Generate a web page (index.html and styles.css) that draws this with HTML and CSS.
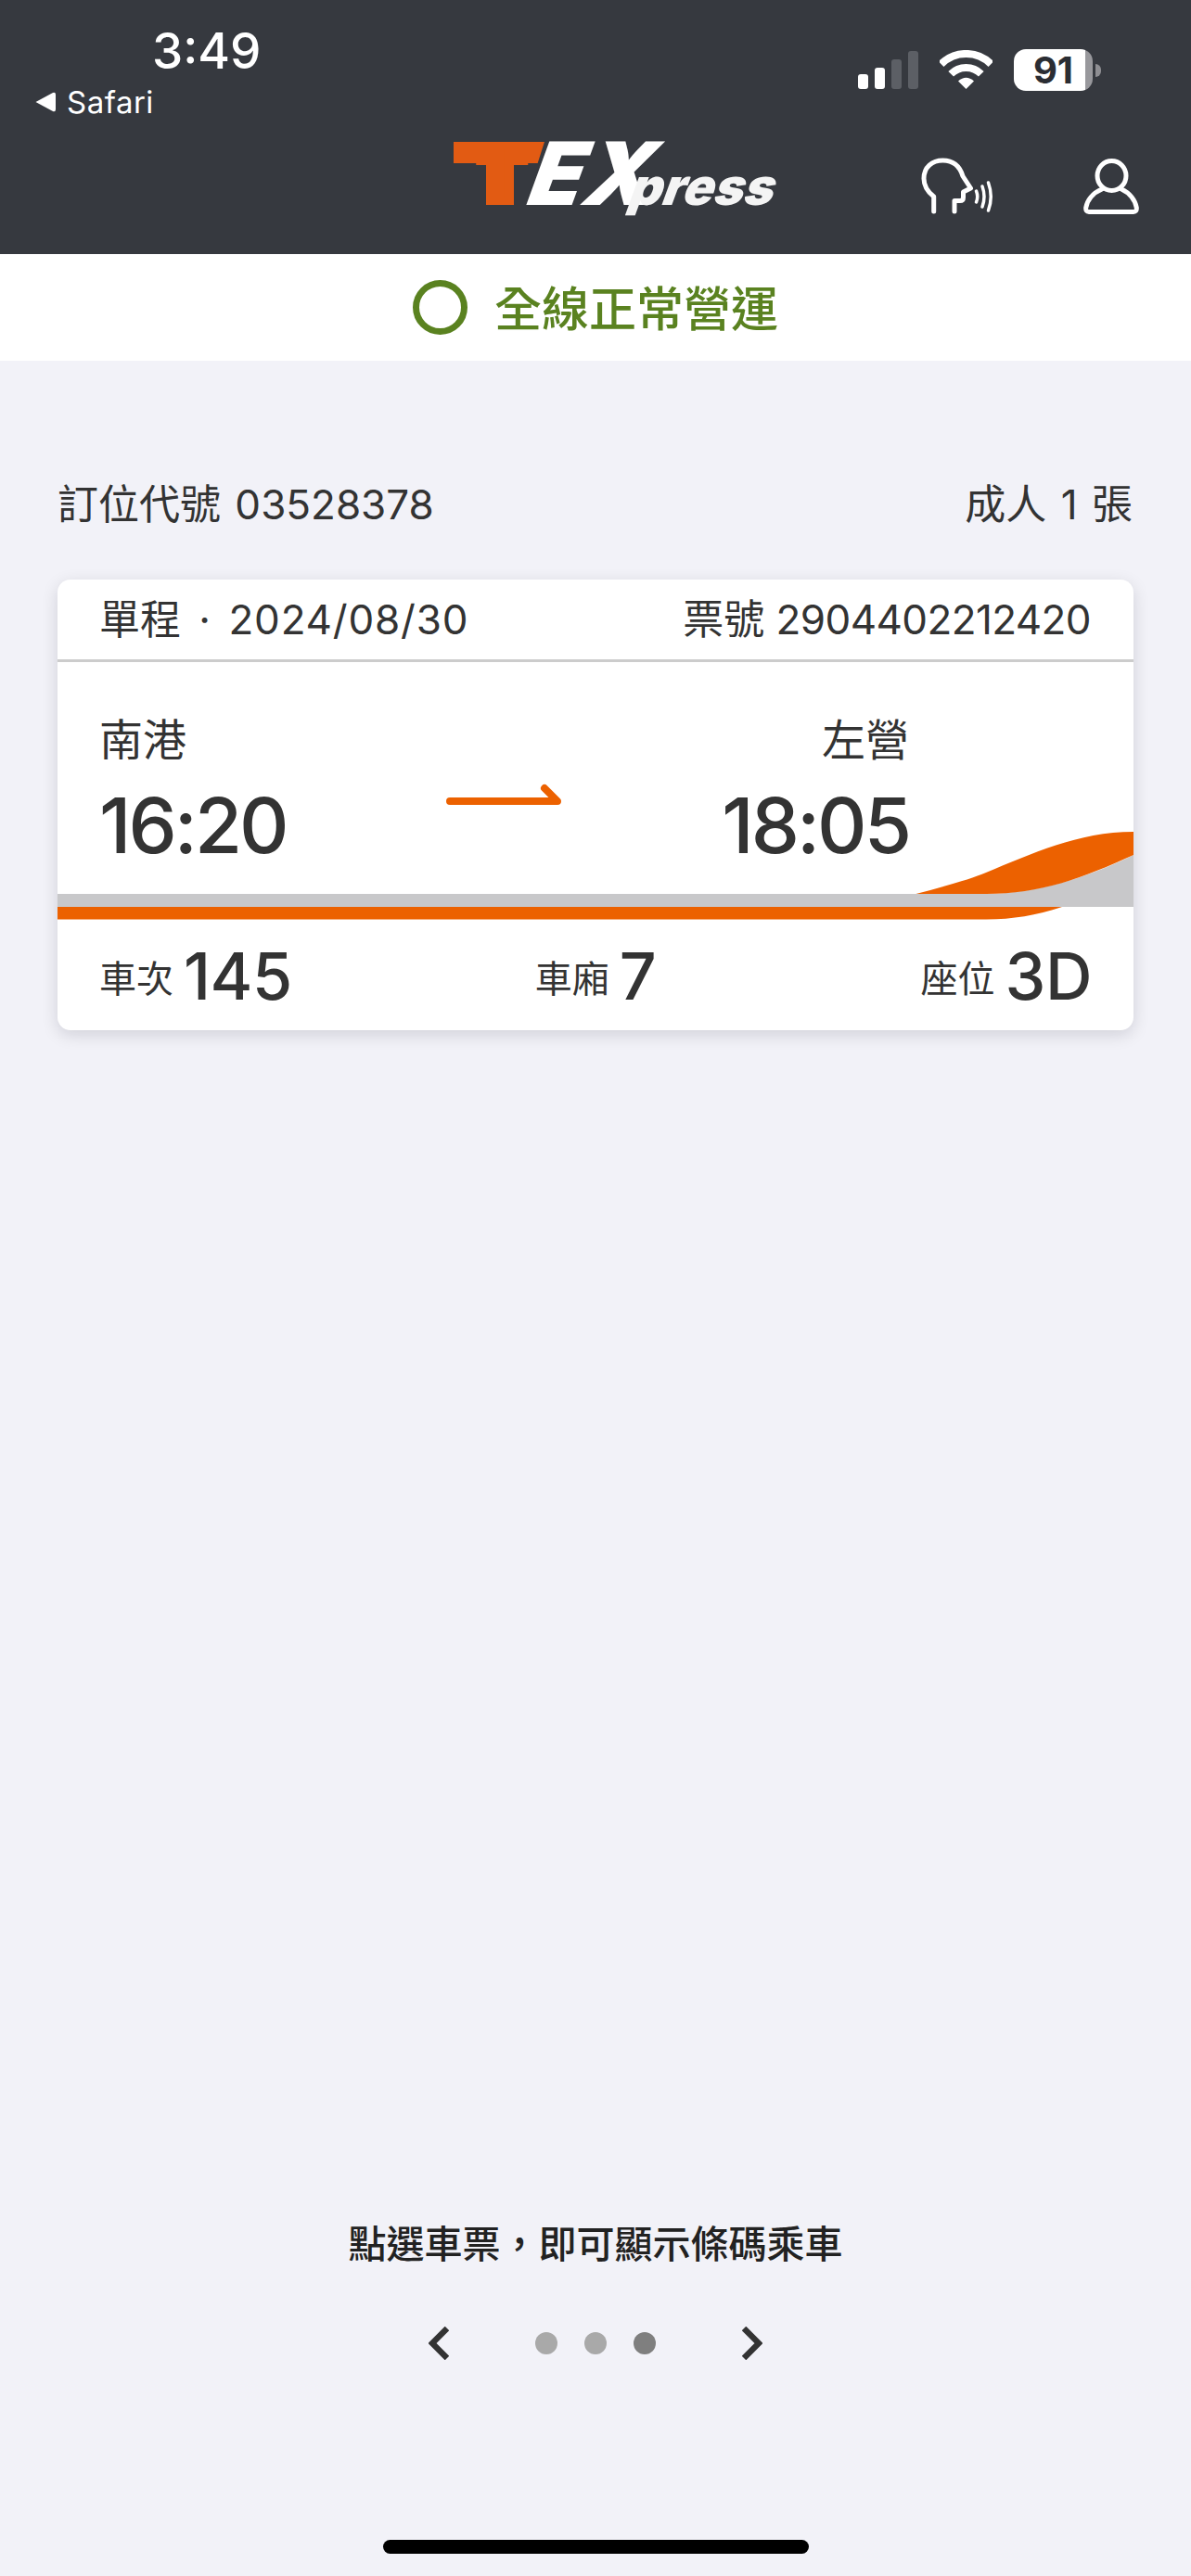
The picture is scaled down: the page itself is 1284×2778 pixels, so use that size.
FILE: index.html
```html
<!DOCTYPE html>
<html lang="zh-Hant">
<head>
<meta charset="utf-8">
<title>TEXpress</title>
<link rel="stylesheet" href="styles.css">
</head>
<body>
<header class="header">
  <div class="statusbar">
    <div class="clock">
      <div class="time">3:49</div>
      <div class="back"><svg class="back-tri" width="22" height="22" viewBox="0 0 22 22"><path d="M0.5 11 L19 1 Q22 0 22 3 V19 Q22 22 19 21 Z"/></svg><span>Safari</span></div>
    </div>
    <div class="status-icons">
      <div class="signal"><i class="bar b1"></i><i class="bar b2"></i><i class="bar b3 dim"></i><i class="bar b4 dim"></i></div>
      <svg class="wifi" width="57" height="42" viewBox="0 0 57 42" fill="none" stroke="#fff" stroke-width="8"><path d="M1.6 15.1 A38 38 0 0 1 55.4 15.1"/><path d="M12.2 25.7 A23 23 0 0 1 44.8 25.7"/><path d="M28.5 42 L20 33.5 Q28.5 26 37 33.5 Z" fill="#fff" stroke="none"/></svg>
      <div class="battery"><span>91</span></div>
      <i class="battery-tip"></i>
    </div>
  </div>
  <nav class="nav">
    <div class="logo" role="img" aria-label="TEXpress">
      <span class="logo-t"><span class="logo-t-glyph">T</span></span>
      <span class="logo-e">E</span>
      <span class="logo-x">X</span>
      <span class="logo-press">press</span>
    </div>
    <svg class="icon-voice" width="100" height="80" viewBox="0 0 100 80" fill="none" stroke="#fff" stroke-width="5" stroke-linecap="round" stroke-linejoin="round">
      <path d="M21.7 68 V52 C14 46 11 39 11 32.5 C11 20 20 13 31.5 13 C43 13 50 20 53 30 L61.5 43 L53.5 47 V53 Q53.5 56.5 50 56.5 H44 V68"/>
      <path d="M67.5 46 Q70 52 67.5 58" stroke-width="3.5"/>
      <path d="M74 41 Q78 52 74 63" stroke-width="3.5"/>
      <path d="M80.5 37 Q86 52 80.5 67" stroke-width="3.5"/>
    </svg>
    <svg class="icon-user" width="60" height="60" viewBox="0 0 60 60" fill="none" stroke="#fff" stroke-width="5" stroke-linecap="round" stroke-linejoin="round">
      <ellipse cx="30.5" cy="18.5" rx="15.5" ry="16"/>
      <path d="M20 33 C10 37 4 45 2.7 53 Q2.3 57.5 6 57.5 H54 Q57.7 57.5 57.3 53 C56 45 50 37 41 33"/>
    </svg>
  </nav>
</header>

<div class="service"><i class="service-ring"></i><span class="service-text">全線正常營運</span></div>

<main class="main">
  <div class="booking"><span>訂位代號 03528378</span><span>成人 1 張</span></div>
  <article class="ticket">
    <div class="ticket-head">
      <span class="trip">單程 · <span class="trip-date">2024/08/30</span></span>
      <span>票號 <span class="ticket-no">2904402212420</span></span>
    </div>
    <div class="route">
      <div class="stop"><div class="station">南港</div><div class="clock-time">16:20</div></div>
      <svg class="arrow" width="124" height="24" viewBox="0 0 124 24" fill="none" stroke="#ec6100" stroke-width="8" stroke-linecap="round" stroke-linejoin="round"><path d="M4 19 H120 L106 5"/></svg>
      <div class="stop stop-end"><div class="station">左營</div><div class="clock-time">18:05</div></div>
    </div>
    <div class="stripe">
      <svg class="stripe-art" width="1160" height="95" viewBox="0 0 1160 95">
        <path fill="#c8c8ca" d="M0 67 H1001 C1060 67 1120 45 1160 25 V81 H0 Z"/>
        <path fill="#ec6100" d="M925.5 67 C955 59 985 51 1001 44 C1050 24 1100 0 1160 0 V25 C1105 50 1060 67 1001 67 Z"/>
        <path fill="#ec6100" d="M0 81 H1083 C1055 90 1030 94.5 1001 94.5 H0 Z"/>
      </svg>
    </div>
    <div class="seat-row">
      <div class="seat"><span class="seat-label">車次</span><span class="seat-value">145</span></div>
      <div class="seat"><span class="seat-label">車廂</span><span class="seat-value">7</span></div>
      <div class="seat seat-end"><span class="seat-label">座位</span><span class="seat-value">3D</span></div>
    </div>
  </article>
</main>

<footer class="footer">
  <p class="hint">點選車票，即可顯示條碼乘車</p>
  <div class="pager">
    <svg width="22" height="36" viewBox="0 0 22 36" fill="none" stroke="#333" stroke-width="6.5"><path d="M20 2 L4 18 L20 34"/></svg>
    <div class="dots"><i class="dot"></i><i class="dot"></i><i class="dot on"></i></div>
    <svg width="22" height="36" viewBox="0 0 22 36" fill="none" stroke="#333" stroke-width="6.5"><path d="M2 2 L18 18 L2 34"/></svg>
  </div>
  <div class="home-indicator"></div>
</footer>
</body>
</html>
```

FILE: styles.css
```css
* { box-sizing: border-box; }
html, body { margin: 0; padding: 0; }
body {
  width: 1284px;
  height: 2778px;
  display: flex;
  flex-direction: column;
  background: #f2f2f8;
  color: #333;
  font-family: Inter, "Noto Sans CJK TC", sans-serif;
  overflow: hidden;
}
i { display: block; }
svg { display: block; flex: none; }

.header { height: 274px; background: #36393f; color: #fff; }
.statusbar { height: 140px; display: flex; justify-content: space-between; }
.clock { padding-left: 38px; }
.time { margin: 24px 0 0 126px; font-size: 53px; line-height: 62px; font-weight: 500; }
.back { display: flex; align-items: center; gap: 12px; margin-top: 3px; font-size: 33px; line-height: 42px; letter-spacing: 0.5px; }
.back-tri { fill: #fff; }

.status-icons { display: flex; align-items: flex-start; padding: 53px 97px 0 0; }
.signal { display: flex; align-items: flex-end; gap: 7px; height: 43px; margin-right: 23px; }
.bar { width: 11px; background: #fff; border-radius: 3px; }
.bar.dim { background: #5c5f65; }
.b1 { height: 16px; }
.b2 { height: 23px; }
.b3 { height: 32px; }
.b4 { height: 41px; }
.wifi { margin: 1px 23px 0 0; }
.battery {
  width: 85px;
  height: 45px;
  border-radius: 13px;
  background: linear-gradient(90deg, #fff 77px, #98989c 77px);
  color: #2b2d33;
  font-size: 40px;
  line-height: 45px;
  font-weight: 700;
  text-align: center;
}
.battery-tip { width: 6px; height: 14px; margin: 16px 0 0 3px; background: #8e8e92; border-radius: 0 7px 7px 0; }

.nav { display: flex; align-items: flex-start; padding-left: 489px; }
.logo { width: 361px; height: 100px; display: flex; align-items: baseline; font-weight: 900; color: #fff; white-space: nowrap; }
.logo-t {
  display: block;
  flex: none;
  width: 98px;
  margin-right: -19px;
  font-size: 94px;
  line-height: 94px;
  color: #e25b13;
  clip-path: polygon(0 13px, 98px 13px, 90px 38px, 65px 38px, 65px 81px, 35px 81px, 35px 38px, 0 38px);
}
.logo-t-glyph {
  display: inline-block;
  transform: scaleX(1.62);
  transform-origin: 0 0;
  -webkit-text-stroke: 16px #e25b13;
}
.logo-e, .logo-x { display: block; flex: none; font-size: 94px; line-height: 94px; transform: skewX(-20deg); transform-origin: 0 81px; }
.logo-e { width: 55px; margin-left: -5px; }
.logo-x { width: 57px; margin-left: 5px; }
.logo-press { display: block; flex: none; font-size: 55px; line-height: 55px; transform: skewX(-20deg); transform-origin: 0 47.5px; color: #f4f4f4; margin-left: -5px; }
.icon-voice { margin: 20px 0 0 135px; }
.icon-user { margin: 31px 0 0 83px; }

.service {
  height: 115px;
  flex: none;
  background: #fff;
  display: flex;
  align-items: center;
  justify-content: center;
  gap: 29px;
  color: #5a8220;
  font-size: 51px;
  font-weight: 500;
}
.service-ring { width: 59px; height: 59px; border: 7px solid #5a8220; border-radius: 50%; }
.service-text { margin-bottom: 4px; }

.main { padding: 0 62px; }
.booking {
  display: flex;
  justify-content: space-between;
  align-items: center;
  margin-top: 130px;
  height: 50px;
  padding: 0 1px 0 0;
  font-size: 44px;
  line-height: 50px;
  word-spacing: 3px;
}
.ticket {
  margin-top: 56px;
  height: 486px;
  background: #fff;
  border-radius: 14px;
  box-shadow: 0 5px 18px rgba(0, 0, 30, 0.14);
  overflow: hidden;
  position: relative;
}
.ticket-head {
  height: 89px;
  border-bottom: 3px solid #ccc;
  padding: 0 46px 6px 45px;
  display: flex;
  justify-content: space-between;
  align-items: center;
  font-size: 44px;
}
.trip { word-spacing: 7px; }
.trip-date { letter-spacing: 0.8px; }
.ticket-no { letter-spacing: -0.6px; }
.route {
  height: 250px;
  padding: 52px 242px 0 45px;
  display: flex;
  justify-content: space-between;
  align-items: flex-start;
}
.stop-end { text-align: right; }
.station { font-size: 47px; line-height: 64px; }
.clock-time { font-size: 83px; line-height: 92px; margin-top: 14px; font-weight: 450; letter-spacing: -3px; }
.arrow { margin-top: 79px; }
.stripe { height: 28px; position: relative; }
.stripe-art { position: absolute; left: 0; bottom: 0; }
.seat-row {
  height: 119px;
  padding: 2px 45px 0;
  display: grid;
  grid-template-columns: 1fr auto 1fr;
  align-items: center;
}
.seat { display: flex; align-items: center; gap: 11px; }
.seat-end { justify-content: flex-end; }
.seat-label { font-size: 40px; }
.seat-value { font-size: 70px; line-height: 80px; font-weight: 450; letter-spacing: -0.5px; }

.footer { margin-top: auto; display: flex; flex-direction: column; align-items: center; }
.hint { margin: 0; font-size: 41px; line-height: 58px; font-weight: 500; color: #222; }
.pager { display: flex; align-items: center; gap: 93px; margin-top: 60px; height: 36px; }
.dots { display: flex; gap: 29px; }
.dot { width: 24px; height: 24px; border-radius: 50%; background: #a9a9a9; }
.dot.on { background: #7f7f7f; }
.home-indicator { width: 459px; height: 15px; margin: 194px 0 24px; background: #000; border-radius: 8px; }
```
